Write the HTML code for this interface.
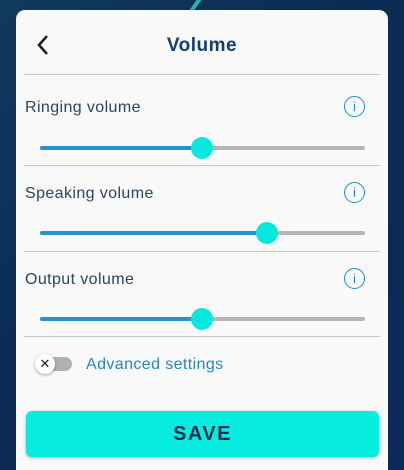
<!DOCTYPE html><html><head><style>
html,body{margin:0;width:404px;height:470px;overflow:hidden}
body{background:linear-gradient(135deg,#123a5c 0%,#0c2c55 40%,#0a2a58 100%);font-family:"Liberation Sans",sans-serif;position:relative}
.card{position:absolute;left:16px;top:10px;width:372px;height:470px;background:#f9f9f9;border-radius:9px}
.t{position:absolute;left:0;width:372px;text-align:center;top:25px;font-size:19px;font-weight:bold;color:#173e73;letter-spacing:0.5px}
.hr{position:absolute;left:8px;width:356px;height:1px;background:#c8c8c8}
.lab{position:absolute;left:9px;font-size:16px;color:#2a4560;letter-spacing:0.4px}
.info{position:absolute;left:328px;width:19px;height:19px;border:1.6px solid #1e8fc6;border-radius:50%;color:#1e8fc6;font-size:13px;text-align:center;line-height:19px}
.tr{position:absolute;left:24px;width:325px;height:4px;background:#b5b5b5;border-radius:2px}
.fill{position:absolute;left:0;top:0;height:4px;background:#2391d2;border-radius:2px}
.th{position:absolute;top:-9px;width:22px;height:22px;border-radius:50%;background:#07e8dc}
</style></head><body>
<div style="position:absolute;left:190px;top:-10px;width:4px;height:40px;background:#2ab0a8;transform:rotate(35deg)"></div>
<div class="card">
<svg style="position:absolute;left:20px;top:24px" width="14" height="22"><path d="M11 2 L3 11 L11 20" stroke="#1b1b2a" stroke-width="2.5" fill="none"/></svg>
<div class="t">Volume</div>
<div class="hr" style="top:64px"></div>
<div class="lab" style="top:89px">Ringing volume</div><div class="info" style="top:86px">i</div>
<div class="tr" style="top:136px"><div class="fill" style="width:162px"></div><div class="th" style="left:151px"></div></div>
<div class="hr" style="top:155px"></div>
<div class="lab" style="top:175px">Speaking volume</div><div class="info" style="top:172px">i</div>
<div class="tr" style="top:221px"><div class="fill" style="width:227px"></div><div class="th" style="left:216px"></div></div>
<div class="hr" style="top:241px"></div>
<div class="lab" style="top:261px">Output volume</div><div class="info" style="top:258px">i</div>
<div class="tr" style="top:307px"><div class="fill" style="width:162px"></div><div class="th" style="left:151px"></div></div>
<div class="hr" style="top:326px"></div>
<div style="position:absolute;left:22px;top:347px;width:34px;height:14px;border-radius:7px;background:#b0b0b0"></div>
<div style="position:absolute;left:19px;top:344px;width:20px;height:20px;border-radius:50%;background:#fff;box-shadow:0 1px 3px rgba(0,0,0,.35);text-align:center;line-height:20px;font-size:13px;color:#222">✕</div>
<div style="position:absolute;left:70px;top:346px;font-size:16px;color:#2587b8;letter-spacing:0.4px">Advanced settings</div>
<div style="position:absolute;left:10px;top:401px;width:353px;height:46px;border-radius:6px;background:#06ede0;box-shadow:0 1px 3px rgba(0,0,0,.3);text-align:center;line-height:46px;font-size:20px;font-weight:bold;letter-spacing:1.5px;color:#15304f">SAVE</div>
</div>
</body></html>
